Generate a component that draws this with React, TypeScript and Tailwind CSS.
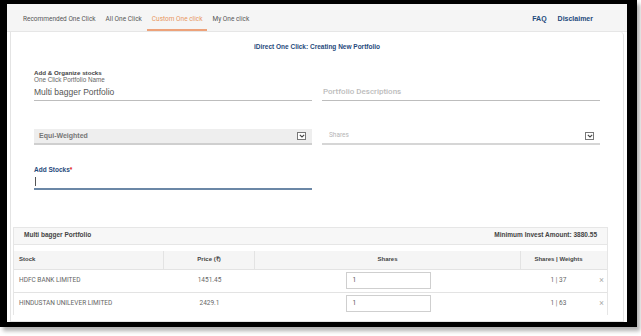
import React from 'react';

const tabs = ['Recommended One Click', 'All One Click', 'Custom One click', 'My One click'];

const rows = [
  { name: 'HDFC BANK LIMITED', price: '1451.45', qty: '1', weight: '1 | 37' },
  { name: 'HINDUSTAN UNILEVER LIMITED', price: '2429.1', qty: '1', weight: '1 | 63' },
];

const Chevron = () => (
  <span className="flex h-[8px] w-[9px] items-center justify-center border border-[#777] bg-white">
    <svg width="6" height="4" viewBox="0 0 6 4">
      <path d="M0.8 0.8 L3 3 L5.2 0.8" fill="none" stroke="#444" strokeWidth="1.1" />
    </svg>
  </span>
);

const App = () => {
  return (
    <div className="h-[336px] w-[641px] overflow-hidden bg-white font-['Roboto',sans-serif]">
      <div className="flex h-[327px] w-[637px] flex-col border-b-[5px] border-l-[7px] border-r-[10px] border-t-4 border-black bg-white shadow-[3px_4px_4px_rgba(0,0,0,0.3)]">
        {/* Tab bar */}
        <div className="flex h-[28px] shrink-0 items-stretch border-b border-[#e6e6e6] bg-[#f5f5f5] pl-[11px] pr-[34px]">
          {tabs.map((t) => (
            <div
              key={t}
              className={
                t === 'Custom One click'
                  ? 'flex items-center border-b-2 border-[#eda27a] px-[5px] pt-[6px] text-[6.5px] text-[#e8955f]'
                  : 'flex items-center border-b-2 border-transparent px-[5px] pt-[6px] text-[6.5px] text-[#555]'
              }
            >
              {t}
            </div>
          ))}
          <div className="ml-auto flex items-center gap-[11px] pt-[4px] font-['Liberation_Sans',sans-serif] text-[7px] font-bold text-[#1f4a7c]">
            <span>FAQ</span>
            <span>Disclaimer</span>
          </div>
        </div>

        {/* Main panel */}
        <div className="mx-[3px] flex flex-1 flex-col rounded-tr-[4px] border border-t-0 border-[#e4e4e4] bg-white">
          <div className="pt-[10px] text-center font-['Liberation_Sans',sans-serif] text-[6.5px] font-bold text-[#1f4a7c]">
            iDirect One Click: Creating New Portfolio
          </div>

          <div className="px-[23px] pt-[17px]">
            <div className="font-['Liberation_Sans',sans-serif] text-[6.2px] font-bold leading-[7px] text-[#444]">
              Add &amp; Organize stocks
            </div>
            <div className="grid grid-cols-2 gap-[10px]">
              <div>
                <div className="font-['Liberation_Sans',sans-serif] text-[6.3px] leading-[7px] text-[#666]">
                  One Click Portfolio Name
                </div>
                <div className="flex h-[18px] items-center border-b border-[#bdbdbd] pt-[2px] font-['Liberation_Sans',sans-serif] text-[8.5px] text-[#555]">
                  Multi bagger Portfolio
                </div>
              </div>
              <div className="flex flex-col justify-end">
                <div className="flex h-[18px] items-center border-b border-[#bdbdbd] pl-[1px] pt-[2px] text-[8px] font-medium text-[#bcbcbc]">
                  Portfolio Descriptions
                </div>
              </div>
            </div>

            <div className="mt-[28px] grid grid-cols-2 gap-[10px]">
              <div className="flex h-[16px] items-center justify-between border-b-2 border-[#cfcfcf] bg-[#eeeeee] pl-[5px] pr-[6px]">
                <span className="font-['Liberation_Sans',sans-serif] text-[7px] font-bold text-[#777]">Equi-Weighted</span>
                <Chevron />
              </div>
              <div className="flex h-[16px] items-center justify-between border-b-2 border-[#d6d6d6] pl-[7px] pr-[6px]">
                <span className="text-[6.5px] text-[#b5b5b5]">Shares</span>
                <Chevron />
              </div>
            </div>

            <div className="mt-[21px] w-[278px]">
              <div className="font-['Liberation_Sans',sans-serif] text-[6.5px] font-bold leading-[8px] text-[#1f4a7c]">
                Add Stocks<span className="text-[#e02020]">*</span>
              </div>
              <div className="flex h-[16px] items-end border-b-2 border-[#6b87a6] pb-[2px] pl-[1px]">
                <span className="h-[9px] w-px bg-[#555]" />
              </div>
            </div>
          </div>

          {/* Table */}
          <div className="ml-[2px] mr-[15px] mt-[37px] border border-b-0 border-[#e6e6e6]">
            <div className="flex h-[16px] items-start justify-between bg-[#f7f7f7] px-[10px] pt-[2px] font-['Liberation_Sans',sans-serif] text-[6.5px] font-bold text-[#444]">
              <span>Multi bagger Portfolio</span>
              <span>Minimum Invest Amount: 3880.55</span>
            </div>
            <div className="border-t border-[#e6e6e6] pt-[6px]">
              <div className="grid h-[18px] grid-cols-[150px_91px_266px_75px_1fr] bg-[#f5f5f5] font-['Liberation_Sans',sans-serif] text-[6px] font-bold text-[#444]">
                <div className="flex items-center border-r border-[#e3e3e3] pl-[5px]">Stock</div>
                <div className="flex items-center justify-center border-r border-[#e3e3e3]">Price (₹)</div>
                <div className="flex items-center justify-center border-r border-[#e3e3e3]">Shares</div>
                <div className="flex items-center justify-center">Shares | Weights</div>
                <div />
              </div>
              {rows.map((r) => (
                <div
                  key={r.name}
                  className="grid h-[23px] grid-cols-[150px_91px_266px_75px_1fr] border-t border-[#e3e3e3] text-[6.5px] text-[#666]"
                >
                  <div className="flex items-center pl-[5px]">{r.name}</div>
                  <div className="flex items-center justify-center">{r.price}</div>
                  <div className="flex items-center justify-center">
                    <div className="flex h-[17px] w-[85px] items-center border border-[#cfcfcf] pl-[6px] text-[#555]">
                      {r.qty}
                    </div>
                  </div>
                  <div className="flex items-center justify-center">{r.weight}</div>
                  <div className="flex items-center justify-center text-[8.5px] text-[#aaa]">×</div>
                </div>
              ))}
            </div>
          </div>
        </div>
      </div>
    </div>
  );
};

export default App;
